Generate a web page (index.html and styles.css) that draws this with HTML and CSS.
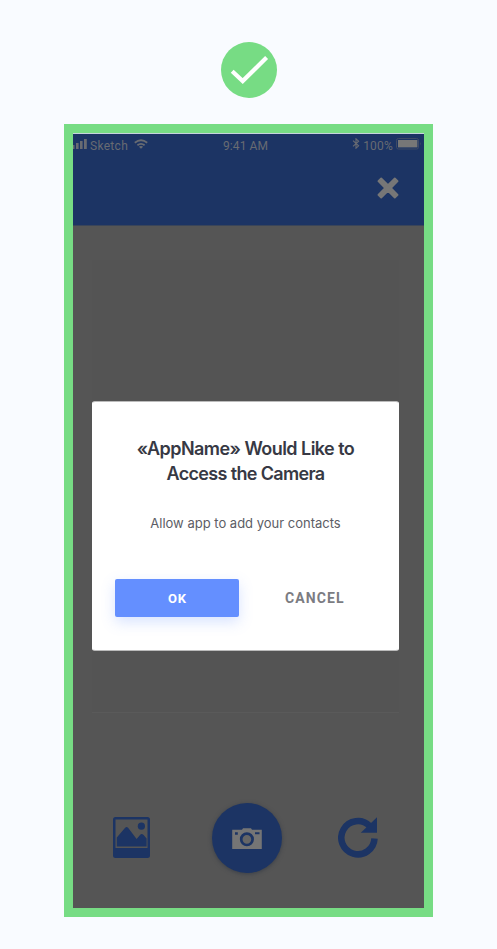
FILE: index.html
```html
<!DOCTYPE html>
<html lang="en">
<head>
<meta charset="utf-8">
<title>Camera permission</title>
<link rel="stylesheet" href="styles.css">
</head>
<body>
<main class="page">
  <svg class="badge" viewBox="0 0 56 56" aria-hidden="true">
    <circle cx="28" cy="28" r="28" fill="#77dc84"/>
    <path d="M11.2 29.2 21.7 39 45.6 15.6" fill="none" stroke="#fff" stroke-width="4.2"/>
  </svg>
  <section class="phone">
    <header class="header">
      <div class="status">
        <div class="status-left">
          <svg class="signal" viewBox="0 0 14 10" aria-hidden="true"><path d="M0 6h1.5v4H0zM3 4h2.6v6H3zM7 2h2.6v8H7zM11 0h2.8v10H11z"/></svg>
          <span>Sketch</span>
          <svg class="wifi" viewBox="0 0 14 10" aria-hidden="true"><path d="M.8 3.7Q7-1.3 13.2 3.7M3.4 6.3q3.6-2.7 7.2 0" fill="none" stroke="currentColor" stroke-width="1.8"/><path d="M4.9 7.7q2.1-1.5 4.2 0L7 9.8z"/></svg>
        </div>
        <span class="time">9:41 AM</span>
        <div class="status-right">
          <svg class="bluetooth" viewBox="0 0 8 11" aria-hidden="true"><path d="M1 2.7 6.6 7.8 4 10.2V.8l2.6 2.4L1 8.3" fill="none" stroke="currentColor" stroke-width="1.1"/></svg>
          <span class="percent">100%</span>
          <svg class="battery" viewBox="0 0 26 12" aria-hidden="true"><rect x=".5" y=".5" width="22" height="10.5" rx="1.8" fill="none" stroke="#3f4b65"/><path d="M2 2h19.4v7.4H2z" fill="#777"/><path d="M24 4q1.6 1.7 0 3.5z" fill="#3f4b65"/></svg>
        </div>
      </div>
      <svg class="close" viewBox="0 0 22 22" aria-hidden="true"><path d="M4.200 1.400 11 8.200l6.800-6.800 2.800 2.800L13.800 11l6.800 6.800-2.800 2.800L11 13.800l-6.800 6.800-2.800-2.800L8.200 11 1.400 4.200z" fill="#777" stroke="#777" stroke-width="1.800" stroke-linejoin="round"/></svg>
    </header>
    <div class="preview"></div>
    <nav class="toolbar">
      <svg class="gallery" viewBox="0 0 37 41" aria-hidden="true"><path fill-rule="evenodd" d="M2.5 0h32Q37 0 37 2.500v36Q37 41 34.500 41h-32Q0 41 0 38.500v-36Q0 0 2.500 0zM2.500 2.500v28.500h32v-28.500z"/><path d="M3.800 29.600v-9.200L11.500 11.500Q13.300 8.700 15.300 11l8.300 11L27 18q1.700-2.200 3.600 0l3 3.600v8z"/><circle cx="28.400" cy="9.200" r="3.600"/></svg>
      <div class="shutter">
        <svg class="camera" viewBox="0 0 30 21" aria-hidden="true"><path fill-rule="evenodd" d="M1 1.800h9L11 .3h8l1 1.500h9.800v19.200H.2V1.800zM3 4.200v2.600h2.800V4.200zM23 4.200v2h4.500v-2z"/><circle cx="14.900" cy="11.300" r="5.700" fill="#666" stroke="#1c3464" stroke-width="2.700"/></svg>
      </div>
      <svg class="retry" viewBox="0 0 40 41" aria-hidden="true"><path d="M36.500 21.500A16.600 16.600 0 1 1 31.500 8.800" fill="none" stroke="currentColor" stroke-width="6.500"/><path d="M39 .2V15.800H22.800z"/></svg>
    </nav>
    <div class="dialog" role="dialog">
      <h1><span class="line-one">«AppName» Would Like to</span><br><span class="line-two">Access the Camera</span></h1>
      <p>Allow app to add your contacts</p>
      <div class="actions">
        <button class="ok">OK</button>
        <button class="cancel">CANCEL</button>
      </div>
    </div>
  </section>
</main>
</body>
</html>
```
FILE: styles.css
```css
* { box-sizing: border-box; }
body { margin: 0; background: #f9fbff; font-family: Roboto, "Liberation Sans", sans-serif; }
.page { height: 949px; padding-top: 42px; display: flex; flex-direction: column; align-items: center; overflow: hidden; }
svg { display: block; fill: currentColor; flex: none; }
.badge { width: 56px; height: 56px; }
.phone { position: relative; width: 369px; height: 793px; margin-top: 26px; border: 9px solid #77dc84; background: #555; display: flex; flex-direction: column; }
.header { height: 93px; border-top: 1px solid #c5d3dc; border-bottom: 1px solid #3a4559; background: #1c3464; color: #686b72; }
.status { display: grid; grid-template-columns: 150px 46px 1fr; height: 24px; align-items: center; font-size: 12px; line-height: 24px; }
.status-left, .status-right { display: flex; align-items: center; }
.signal { width: 14px; height: 10px; margin: 0 3px 5px 0; }
.status-left span { letter-spacing: .3px; }
.wifi { width: 14px; height: 10px; margin: 0 0 5px 6px; }
.time { letter-spacing: .1px; white-space: nowrap; }
.status-right { justify-content: flex-end; }
.bluetooth { width: 8px; height: 11px; margin: 0 3px 5px 0; }
.percent { letter-spacing: .2px; }
.battery { width: 26px; height: 12px; margin: 0 2px 4px 3px; }
.close { width: 22px; height: 22px; margin: 19px 0 0 304px; }
.preview { width: 307px; height: 453px; margin: 34px 0 0 19px; background: #545454; border-bottom: 1px solid #5a5a5a; }
.toolbar { display: flex; margin: 89px 0 0 40px; height: 71px; align-items: center; color: #1c3464; }
.gallery { width: 37px; height: 41px; }
.shutter { width: 70px; height: 70px; margin: 1px 0 0 62px; border-radius: 50%; background: #1c3464; display: flex; justify-content: center; align-items: center; color: #757575; box-shadow: 0 1px 4px #3a3f48; }
.camera { width: 30px; height: 21px; }
.retry { width: 40px; height: 41px; margin-left: 56px; }
.dialog { position: absolute; left: 19px; top: 268px; width: 307px; height: 250px; padding-top: 34px; border: 1px solid #fff; border-top-color: #bbb; border-bottom-color: #bbb; border-radius: 3px; background: #fff; text-align: center; }
h1 { margin: 0; color: #373944; font: 600 18px/25px Inter, "Liberation Sans", sans-serif; white-space: nowrap; }
p { margin: 25px 0 0; color: #5c5d65; font: 13px/24px Inter, "Liberation Sans", sans-serif; }
.line-one { letter-spacing: -.55px; }
.line-two { letter-spacing: -.65px; }
.actions { display: flex; margin: 44px 0 0 22px; }
button { border: 0; padding: 0; height: 38px; border-radius: 2px; font: 700 13px/38px Roboto, "Liberation Sans", sans-serif; }
.ok { width: 124px; padding: 1px 0 0 1px; background: #648fff; color: #fff; letter-spacing: 1px; box-shadow: 0 5px 14px rgba(100, 143, 255, .25); }
.cancel { margin-left: 46px; background: transparent; color: #7b7c82; font-size: 14px; letter-spacing: 1.1px; }
```
